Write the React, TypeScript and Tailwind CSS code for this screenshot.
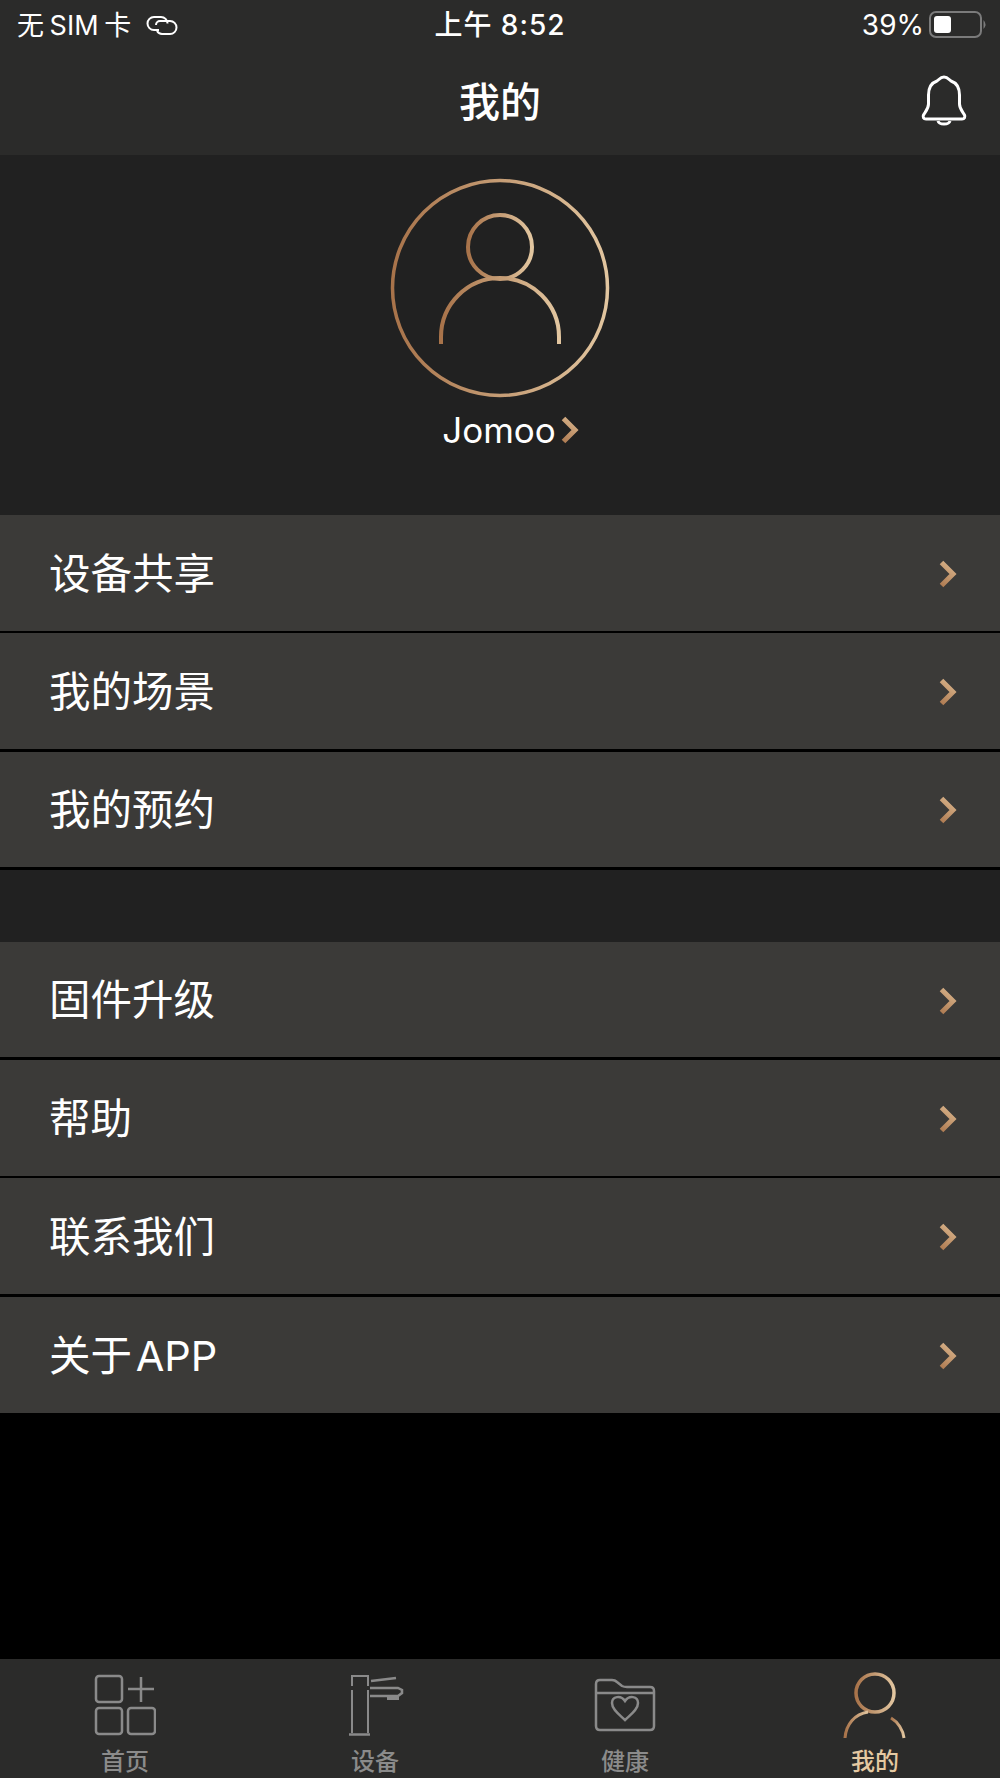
import React from "react";

const font = { fontFamily: '"Inter","Noto Sans CJK SC",sans-serif' };

function Grad({ id }: { id: string }) {
  return (
    <defs>
      <linearGradient id={id} x1="0" y1="0" x2="1" y2="0">
        <stop offset="0" stopColor="#a8734a" />
        <stop offset="1" stopColor="#e2c6a0" />
      </linearGradient>
    </defs>
  );
}

function Chevron({ id, w = 18, h = 28 }: { id: string; w?: number; h?: number }) {
  return (
    <svg width={w} height={h} viewBox="0 0 18 28" fill="none">
      <defs>
        <linearGradient id={id} gradientUnits="userSpaceOnUse" x1="0" y1="28" x2="18" y2="4">
          <stop offset="0" stopColor="#a9744b" />
          <stop offset="1" stopColor="#dcb88f" />
        </linearGradient>
      </defs>
      <path d="M2.500 2.500 L14 14 L2.500 25.500" stroke={`url(#${id})`} strokeWidth="5" />
    </svg>
  );
}

function Row({ label, id, last }: { label: string; id: string; last?: boolean }) {
  return (
    <div className={`flex items-center justify-between bg-[#3b3a38] pl-[49px] pr-[43px] ${last ? "h-[116px]" : "h-[115.5px] mb-[2.8px]"}`}>
      <span className="text-[41.500px] leading-none text-white font-normal pt-[3px] [word-spacing:-8px]">{label}</span>
      <span className="pt-[2px] flex">
        <Chevron id={id} />
      </span>
    </div>
  );
}

function Tab({ label, active, children }: { label: string; active?: boolean; children: React.ReactNode }) {
  return (
    <div className="flex flex-col items-center w-[250px]">
      <div className="h-[75px] w-full flex justify-center items-start">{children}</div>
      <span className={`text-[24px] leading-[30px] font-medium ${active ? "text-[#e5c9a2]" : "text-[#8b8b8b]"}`}>{label}</span>
    </div>
  );
}

export default function App() {
  return (
    <div className="w-[1000px] h-[1778px] bg-black flex flex-col overflow-hidden" style={font}>
      <header className="bg-[#2b2b2a] h-[155px] shrink-0 text-white">
        <div className="grid grid-cols-3 items-center h-[50px] text-[28px] leading-none">
          <div className="flex items-center pl-[17px] gap-[14px] font-normal text-[27px]">
            <span className="[word-spacing:-2px]">无 SIM 卡</span>
            <svg width="34" height="20" viewBox="0 0 34 20" fill="none" stroke="#fff" strokeWidth="2">
              <path d="M14 15 H9 a6.500 6.500 0 0 1 0 -13 H16 a6.500 6.500 0 0 1 6.500 6.500 " />
              <path d="M11 10 a4 4 0 0 1 4 -4 H25 a6.500 6.500 0 0 1 0 13 H17 a6 6 0 0 1 -5 -3" />
            </svg>
          </div>
          <div className="text-center font-medium tracking-[1px]">上午 8:52</div>
          <div className="flex items-center justify-end pr-[12px] gap-[5px] font-normal">
            <span>39%</span>
            <svg width="59" height="28" viewBox="0 0 59 28" fill="none">
              <rect x="1" y="1" width="51" height="25" rx="6" stroke="#7b7b7b" strokeWidth="2" />
              <rect x="5" y="5" width="17" height="17" rx="3" fill="#fff" />
              <path d="M54.500 9 Q58.500 13.500 54.500 18 Z" fill="#7b7b7b" />
            </svg>
          </div>
        </div>
        <div className="relative h-[105px] flex items-center justify-center">
          <h1 className="text-[41px] leading-none font-medium">我的</h1>
          <svg className="absolute right-[33px] top-[25px]" width="46" height="52" viewBox="0 0 46 52" fill="none" stroke="#fff" strokeWidth="3" strokeLinejoin="round">
            <path d="M23 2 C19 2 18 5 16 6 C10 8 7.500 14 7.500 20 V29 C7.500 34 4 37 2.500 40 C1.500 42 2.500 44 5 44 H41 C43.500 44 44.500 42 43.500 40 C42 37 38.500 34 38.500 29 V20 C38.500 14 36 8 30 6 C28 5 27 2 23 2 Z" />
            <path d="M17 46 C18 50 28 50 29 46" />
          </svg>
        </div>
      </header>

      <section className="bg-[#212121] h-[360px] shrink-0 flex flex-col items-center">
        <svg className="mt-[23px]" width="220" height="220" viewBox="0 0 220 220" fill="none">
          <Grad id="avatarGrad" />
          <circle cx="110" cy="110" r="107.500" stroke="url(#avatarGrad)" strokeWidth="3.500" />
          <circle cx="110" cy="69" r="32" stroke="url(#avatarGrad)" strokeWidth="4" />
          <path d="M51 166 V159 A59 59 0 0 1 169 159 V166" stroke="url(#avatarGrad)" strokeWidth="4" />
        </svg>
        <div className="flex items-center mt-[10px] ml-[21px] gap-[5px]">
          <span className="text-[35px] leading-[44px] text-white font-normal">Jomoo</span>
          <Chevron id="nameChevron" />
        </div>
      </section>

      <div className="shrink-0">
        <Row label="设备共享" id="c1" />
        <Row label="我的场景" id="c2" />
        <Row label="我的预约" id="c3" />
      </div>
      <div className="bg-[#212121] h-[72px] shrink-0" />
      <div className="shrink-0">
        <Row label="固件升级" id="c4" />
        <Row label="帮助" id="c5" />
        <Row label="联系我们" id="c6" />
        <Row label="关于 APP" id="c7" last />
      </div>

      <div className="flex-1" />

      <nav className="bg-[#2b2b2a] h-[119px] shrink-0 flex pt-[13px]">
        <Tab label="首页">
          <svg className="mt-[1px]" width="62" height="66" viewBox="0 0 62 66" fill="none" stroke="#8a8a8a" strokeWidth="2.500">
            <rect x="2" y="3" width="26" height="26" rx="3" />
            <path d="M34 16 H60 M47 4 V29" />
            <rect x="2" y="35" width="26" height="26" rx="3" />
            <rect x="34" y="35" width="27" height="26" rx="3" />
          </svg>
        </Tab>
        <Tab label="设备">
          <svg className="ml-[1px] mt-[1px]" width="56" height="66" viewBox="0 0 56 66" fill="none" stroke="#8a8a8a" strokeWidth="2">
            <path d="M4 13 V3 H20 V13 M4 17 V60 M20 17 V60" />
            <path d="M1 61.500 H22" strokeWidth="2.500" />
            <path d="M23 8 L48 5" strokeWidth="2.500" />
            <path d="M22 15 H50 L54 17 V20 L50 23 H22" strokeWidth="2.500" />
            <path d="M39 25.500 H51" strokeWidth="3" />
          </svg>
        </Tab>
        <Tab label="健康">
          <svg className="mt-[6px]" width="62" height="56" viewBox="0 0 62 56" fill="none" stroke="#8a8a8a" strokeWidth="2.500">
            <path d="M2 15 V6 Q2 2 6 2 H18 Q21 2 23 4 L28 8 Q30 9 33 9 H56 Q60 9 60 13 V48 Q60 52 56 52 H6 Q2 52 2 48 Z" />
            <path d="M2 15 H60" />
            <path d="M31 42 C26 37 18 32 18 25 C18 18 27 17 31 23 C35 17 44 18 44 25 C44 32 36 37 31 42 Z" />
          </svg>
        </Tab>
        <Tab label="我的" active>
          <svg className="mt-0" width="64" height="70" viewBox="0 0 64 70" fill="none">
            <Grad id="tabGrad" />
            <circle cx="32" cy="21" r="19" stroke="url(#tabGrad)" strokeWidth="3.500" />
            <path d="M2 66 C3 52 12 42 25 40" stroke="url(#tabGrad)" strokeWidth="3" />
            <path d="M48 46 C55 50 60 58 61 66" stroke="url(#tabGrad)" strokeWidth="3" />
          </svg>
        </Tab>
      </nav>
    </div>
  );
}
